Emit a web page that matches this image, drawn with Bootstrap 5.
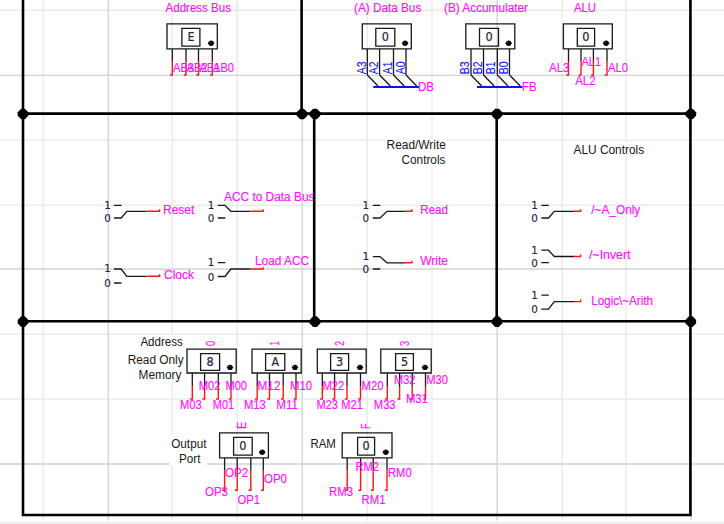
<!DOCTYPE html>
<html lang="en">
<head>
<meta charset="utf-8">
<meta name="viewport" content="width=device-width, initial-scale=1">
<title>Processor schematic</title>
<link href="https://cdn.jsdelivr.net/npm/bootstrap@5.3.0/dist/css/bootstrap.min.css" rel="stylesheet">
<style>
body{background:#fff}
.schematic{width:724px;height:524px}
.schematic text{font:12px "Liberation Sans",Arial,sans-serif}
.schematic .net{fill:#ff10ff;stroke:#ff10ff;stroke-width:.15}
.schematic .note{fill:#181818}
.schematic .tap{fill:#1010f0;stroke:#1010f0;stroke-width:.1}
.schematic .level{font:11px "DejaVu Sans","Noto Sans",sans-serif;fill:#26263c;stroke:#26263c;stroke-width:.15}
.schematic .digit{font:11.5px "DejaVu Sans","Noto Sans",sans-serif;fill:#26263c;stroke:#26263c;stroke-width:.2}
.schematic .grid-soft{stroke:#ebebeb;stroke-width:1.5;fill:none}
.schematic .grid-main{stroke:#d2d2d2;stroke-width:1.3;fill:none}
.schematic .frame-line{stroke:#000;stroke-width:2.6;fill:none}
.schematic .wire{stroke:#181818;stroke-width:1.3;fill:none}
.schematic .live{stroke:#ff1414;stroke-width:1.4;fill:none}
.schematic .bus{stroke:#1010f0;stroke-width:2.2;fill:none}
.schematic .mask-box{fill:#fff}
</style>
</head>
<body>
<main class="container-fluid p-0 overflow-hidden">
<svg id="board" class="schematic d-block" viewBox="0 0 724 524" role="img" aria-label="Processor schematic"></svg>
</main>
<script src="https://cdn.jsdelivr.net/npm/bootstrap@5.3.0/dist/js/bootstrap.bundle.min.js"></script>
<script>
const board = document.getElementById('board');
const add = (tag, attrs, txt) => {
  const el = document.createElementNS('http://www.w3.org/2000/svg', tag);
  for (const k in attrs) el.setAttribute(k, attrs[k]);
  if (txt !== undefined) el.textContent = txt;
  board.appendChild(el);
};
const path = (cls, d) => add('path', {class: cls, d});
// label from x0 to x1 on a baseline
const label = (cls, s, x0, x1, y) =>
  add('text', {class: cls, x: x0, y, textLength: x1 - x0, lengthAdjust: 'spacingAndGlyphs'}, s);
// label that reads upwards, its baseline at x and its start at y
const upright = (cls, s, x, y, len) =>
  add('text', {class: cls, transform: `translate(${x} ${y}) rotate(-90)`, textLength: len, lengthAdjust: 'spacingAndGlyphs'}, s);

// grid
path('grid-soft', [43.3,172.3,237.2,367.2,432,562.2,626].map(x => `M${x} 0V520.5`).join('') +
  [10.3,140.3,205.3,334.2,399].map(y => `M0 ${y}H724`).join('') + 'M0 522.7H724');
path('grid-main', [108.3,302.2,497.2,691.2].map(x => `M${x} 0V520.5`).join('') +
  [75.3,269,464].map(y => `M0 ${y}H724`).join(''));

// clear areas behind the notes
[[385,139,62,28],[571,142,76,16],[126,335,58,47],[170,436,37,30],[309,436,28,18]]
  .forEach(([x,y,width,height]) => add('rect', {class:'mask-box', x, y, width, height}));

// hex displays: left, right, top, inner left, inner right, value, pins, end of black, end of red
const displays = [
  [167,217.3,23.8,181.9,199.9,'E',[172.3,186,198.5,212.3],61,75],
  [362.3,411.3,23.8,375.8,394.8,'0',[367.3,379.6,393.5,406],75,0],
  [465.8,514.8,23.8,479.5,498.5,'0',[471,483.5,497.3,509.5],75,0],
  [563.4,612.3,23.8,577.3,594.6,'0',[568.5,581,593.4,607],61,75],
  [187,236.2,349.2,200.6,219.6,'8',[192.3,204.6,218.3,231],386,399],
  [252,301.2,349.2,265.6,284.8,'A',[257.2,269.5,283.2,296],386,399],
  [317.3,366.2,349.2,330.6,348.6,'3',[322.3,334.6,347,360.5],386,399],
  [380.8,431.2,349.2,395.6,413.4,'5',[387.3,399.6,412.2,425.5],386,399],
  [219.6,268.4,432.9,233.6,252.2,'0',[224.6,237.2,250.8,263.3],470,490.3],
  [342.2,392,432.9,357.6,374.6,'0',[347.2,360.6,373.2,387],470,490.3]
];
displays.forEach(([l,r,t,a,b,v,pins,black,red]) => {
  const h = t < 300 ? 25 : t < 400 ? 23.8 : 24.9;
  path('wire', `M${l} ${t}H${r}V${t+h}H${l}ZM${a} ${t+4.5}H${b}V${t+h-2.6}H${a}Z` + pins.map(x => `M${x} ${t+h}V${black}`).join(''));
  const dx = r - 6.2, dy = t + h - 5.6;
  path('wire', `M${dx-3.2} ${dy}H${dx+3.2}`);
  add('circle', {cx: dx, cy: dy, r: 2.7, fill: '#000'});
  add('circle', {cx: dx-1, cy: dy-1.2, r: .5, fill: '#999'});
  const w = v === 'E' ? 7 : v === 'A' ? 7.6 : 7.2, c = (a + b) / 2;
  label('digit', v, c - w/2, c + w/2, t + h/2 + 4.9);
  if (red) path('live', pins.map(x => `M${x} ${black}V${red}M${x-2.2} ${red}H${x+.6}`).join(''));
  else path('wire', pins.map(x => `M${x} ${black}l10.7 11`).join(''));
});
path('bus', 'M373.3 87H419M477 87H522.5');

// switches: digit x, lever x, joint x, end of black, end of red, y of 1, y of 0, y of output, selected
[[104.2,114,126.8,146.5,160,205.3,218,211.3,0],
 [104.2,114,126.8,146.5,160,269,283,276.3,1],
 [207.8,217.8,230.8,250.5,263.5,205.3,218,211.3,1],
 [207.8,217.8,230.8,250.5,263.5,262.7,276.5,269,0],
 [362.6,372.8,387,405.5,412.3,205.3,218,211.3,0],
 [362.6,372.8,387,405.5,412.3,256.6,269,262.8,1],
 [531.2,541.3,554.3,574,581,205.3,218,211.3,0],
 [531.2,541.3,554.3,574,581,250.2,262.7,256.5,1],
 [531.2,541.3,554.3,574,581,295.2,309.2,301.6,0]
].forEach(([n,x,j,k,e,y1,y0,yo,on]) => {
  const ys = on ? y1 : y0, yn = on ? y0 : y1;
  path('wire', `M${x} ${yn}h7.5M${x} ${ys}h7.2L${j} ${yo}H${k}`);
  path('live', `M${k} ${yo}H${e}M${e-.4} ${yo-2}V${yo+.7}`);
  label('level', '1', n, n + 6.6, y1 + 3.4);
  label('level', '0', n, n + 6.6, y0 + 4.2);
});

// net labels
[['Address Bus',165.5,231,12],['(A) Data Bus',354,421.3,12],['(B) Accumulater',444,528,12],['ALU',574,596,12],
 ['AB3',173,194,72.3],['AB2',186.5,207.5,72.3],['AB1',199.5,220,72.3],['AB0',213,234,72.3],
 ['DB',418,434,91],['FB',522,536.5,91],
 ['AL3',549,569.5,72.3],['AL1',581.5,601,66],['AL2',575.3,595.5,84.7],['AL0',608,628,72.3],
 ['Reset',163,194.3,213.8],['Clock',164,194,278.8],['ACC to Data Bus',224,314.5,201],['Load ACC',255,309,265],
 ['Read',420.3,448,213.8],['Write',420.3,448,265],['/~A_Only',591.3,640.3,213.8],['/~Invert',589,630.5,258.8],['Logic\\~Arith',591.3,653,305],
 ['M02',198.8,220.5,389.8],['M00',225.5,247,389.8],['M03',180,201.8,408.7],['M01',212.8,234,408.7],
 ['M12',257.5,280.5,389.8],['M10',290,312,389.8],['M13',244,265.8,408.7],['M11',276.3,298,408.7],
 ['M22',322.5,344.3,389.8],['M20',361.5,383.5,389.8],['M23',316.5,338,408.7],['M21',341.3,363,408.7],
 ['M32',394,415.5,383.8],['M30',426.3,448,383.8],['M33',373.8,395.6,408.7],['M31',406,427.8,402.5],
 ['OP2',225,248.3,477.2],['OP3',205,228,496],['OP0',264,287,483.4],['OP1',237.5,260,503.7],
 ['RM2',355.5,379,471],['RM0',388,411.7,477.2],['RM3',329,353,496],['RM1',361.6,385.5,503.7]
].forEach(a => label('net', ...a));
[['0',215,345.9,5.2],['1',279,345.4,4.4],['2',344,345.9,5.2],['3',408.5,345.9,5.2],['E',246.2,429.1,7.2],['F',370.2,428.9,5.6]]
  .forEach(a => upright('net', ...a));
[['A3',366,74.2],['A2',378.3,74.2],['A1',392,74.2],['A0',404.6,74.2],['B3',469,74.2],['B2',482,74.2],['B1',495.3,74.2],['B0',508,74.2]]
  .forEach(a => upright('tap', ...a, 12.8));

// notes
[['Read/Write',386.6,445.8,148.6],['Controls',401.5,445.4,163.7],['ALU Controls',573.5,644.2,153.7],
 ['Address',140.4,182.8,346.2],['Read Only',127.7,183.7,364.2],['Memory',138.6,181.4,379],
 ['Output',171.2,206.5,447.8],['Port',179,200.4,462.7],['RAM',310.4,335.8,447.8]
].forEach(a => label('note', ...a));

// frame and junctions
path('frame-line', 'M23 0V515H690.4V0M301.6 0V113.6M314.2 113.6V321.3M496.7 113.6V321.3M23 113.6H690.4M23 321.3H690.4');
[[23,114],[302,114],[315,114],[497,114],[690.8,114],[23,321.6],[315,321.6],[497,321.6],[690.8,321.6]]
  .forEach(([x,y]) => add('path', {fill:'#000', d:`M${x-5.3} ${y-1.7}l3.5-3.6h3.6l3.5 3.6v3.4l-3.5 3.6h-3.6l-3.5-3.6z`}));
</script>
</body>
</html>
